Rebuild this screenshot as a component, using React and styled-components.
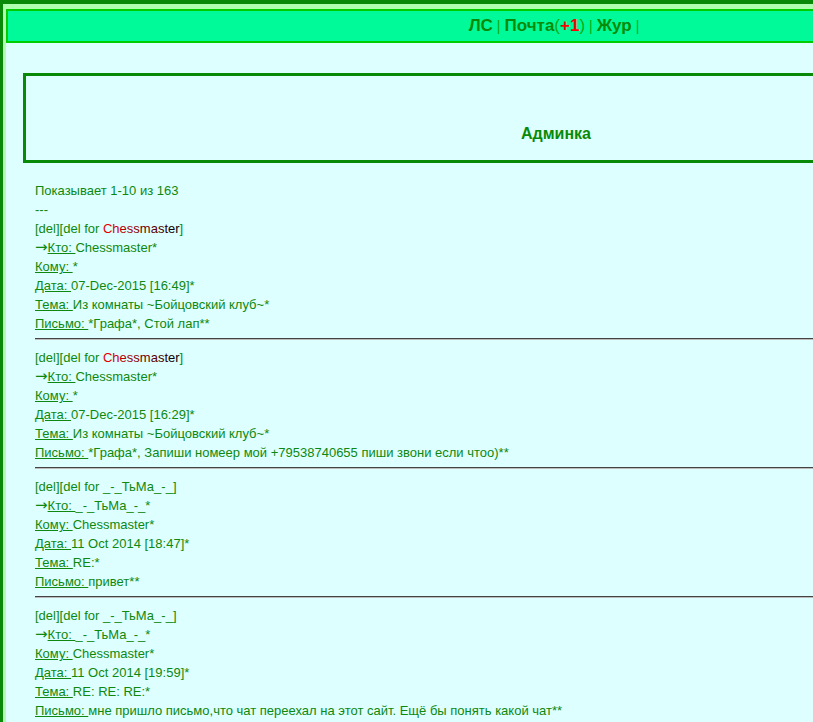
import styled, { createGlobalStyle } from "styled-components";

const GlobalStyle = createGlobalStyle`
	html, body {
		margin: 0;
		padding: 0;
		overflow: hidden;
		background: #ddffff;
	}
	body {
		font-family: "Liberation Sans", Arial, sans-serif;
	}
`;

const Frame = styled.div`
	width: 1106px;
	min-height: 100vh;
	box-sizing: border-box;
	border-top: 4px solid #088a08;
	border-left: 3px solid #088a08;
	background: #ddffff;
`;

const Inner = styled.div`
	min-height: calc(100vh - 4px);
	box-sizing: border-box;
	border-top: 5px solid #b0ffb0;
	border-left: 3px solid #b0ffb0;
`;

const TopBar = styled.div`
	height: 30px;
	border: 2px solid #00cc00;
	background: #00fa9a;
	display: flex;
	align-items: center;
	justify-content: center;
	font-size: 17px;
	color: #088a08;
`;

const NavLink = styled.span`
	font-weight: bold;
`;

const Sep = styled.span`
	font-size: 14px;
	color: #11a811;
	margin: 0 4px;
`;

const Paren = styled.span`
	font-weight: normal;
	color: #11a811;
`;

const Count = styled.span`
	color: #ff0000;
	font-weight: bold;
`;

const TitleBox = styled.div`
	margin: 30px 17px 0;
	height: 84px;
	border: 3px solid #088a08;
`;

const Title = styled.div`
	padding-top: 49px;
	text-align: center;
	font-size: 16px;
	font-weight: bold;
	color: #088a08;
`;

const List = styled.div`
	margin: 18px 0 0 29px;
	font-size: 13px;
	line-height: 19px;
	color: #0e880e;
`;

const Line = styled.div`
	white-space: nowrap;
`;

const Arrow = styled.span`
	font-family: "DejaVu Sans", sans-serif;
	font-size: 15px;
	line-height: 1;
`;

const Label = styled.span`
	text-decoration: underline;
`;

const Rule = styled.hr`
	margin: 5px 0 8px;
	height: 0;
	border: none;
	border-top: 1px solid #444444;
	border-bottom: 1px solid #bbbbbb;
`;

// letters fade from red to black
function Fade({ text }) {
	const n = text.length;
	return (
		<>
			{text.split("").map((ch, i) => {
				const r = Math.round(230 * (1 - i / (n - 1)));
				return (
					<span key={i} style={{ color: `rgb(${r},0,0)` }}>
						{ch}
					</span>
				);
			})}
		</>
	);
}

const letters = [
	{
		del: <Fade text="Chessmaster" />,
		from: "Chessmaster",
		to: "",
		date: "07-Dec-2015 [16:49]",
		subject: "Из комнаты ~Бойцовский клуб~",
		body: "*Графа*, Стой лап*",
	},
	{
		del: <Fade text="Chessmaster" />,
		from: "Chessmaster",
		to: "",
		date: "07-Dec-2015 [16:29]",
		subject: "Из комнаты ~Бойцовский клуб~",
		body: "*Графа*, Запиши номеер мой +79538740655 пиши звони если чтоо)*",
	},
	{
		del: "_-_ТьМа_-_",
		from: "_-_ТьМа_-_",
		to: "Chessmaster",
		date: "11 Oct 2014 [18:47]",
		subject: "RE:",
		body: "привет*",
	},
	{
		del: "_-_ТьМа_-_",
		from: "_-_ТьМа_-_",
		to: "Chessmaster",
		date: "11 Oct 2014 [19:59]",
		subject: "RE: RE: RE:",
		body: "мне пришло письмо,что чат переехал на этот сайт. Ещё бы понять какой чат*",
	},
];

export default function App() {
	return (
		<>
			<GlobalStyle />
			<Frame>
				<Inner>
					<TopBar>
						<NavLink>ЛС</NavLink>
						<Sep>|</Sep>
						<NavLink>
							Почта<Paren>(</Paren>
							<Count>+1</Count>
							<Paren>)</Paren>
						</NavLink>
						<Sep>|</Sep>
						<NavLink>Жур</NavLink>
						<Sep>|</Sep>
					</TopBar>
					<TitleBox>
						<Title>Админка</Title>
					</TitleBox>
					<List>
						<Line>Показывает 1-10 из 163</Line>
						<Line>---</Line>
						{letters.map((m, i) => (
							<div key={i}>
								<Line>
									[del][del for {m.del}]
								</Line>
								<Line>
									<Arrow>→</Arrow>
									<Label>Кто: </Label>
									{m.from}*
								</Line>
								<Line>
									<Label>Кому: </Label>
									{m.to}*
								</Line>
								<Line>
									<Label>Дата: </Label>
									{m.date}*
								</Line>
								<Line>
									<Label>Тема: </Label>
									{m.subject}*
								</Line>
								<Line>
									<Label>Письмо: </Label>
									{m.body}*
								</Line>
								<Rule />
							</div>
						))}
					</List>
				</Inner>
			</Frame>
		</>
	);
}
